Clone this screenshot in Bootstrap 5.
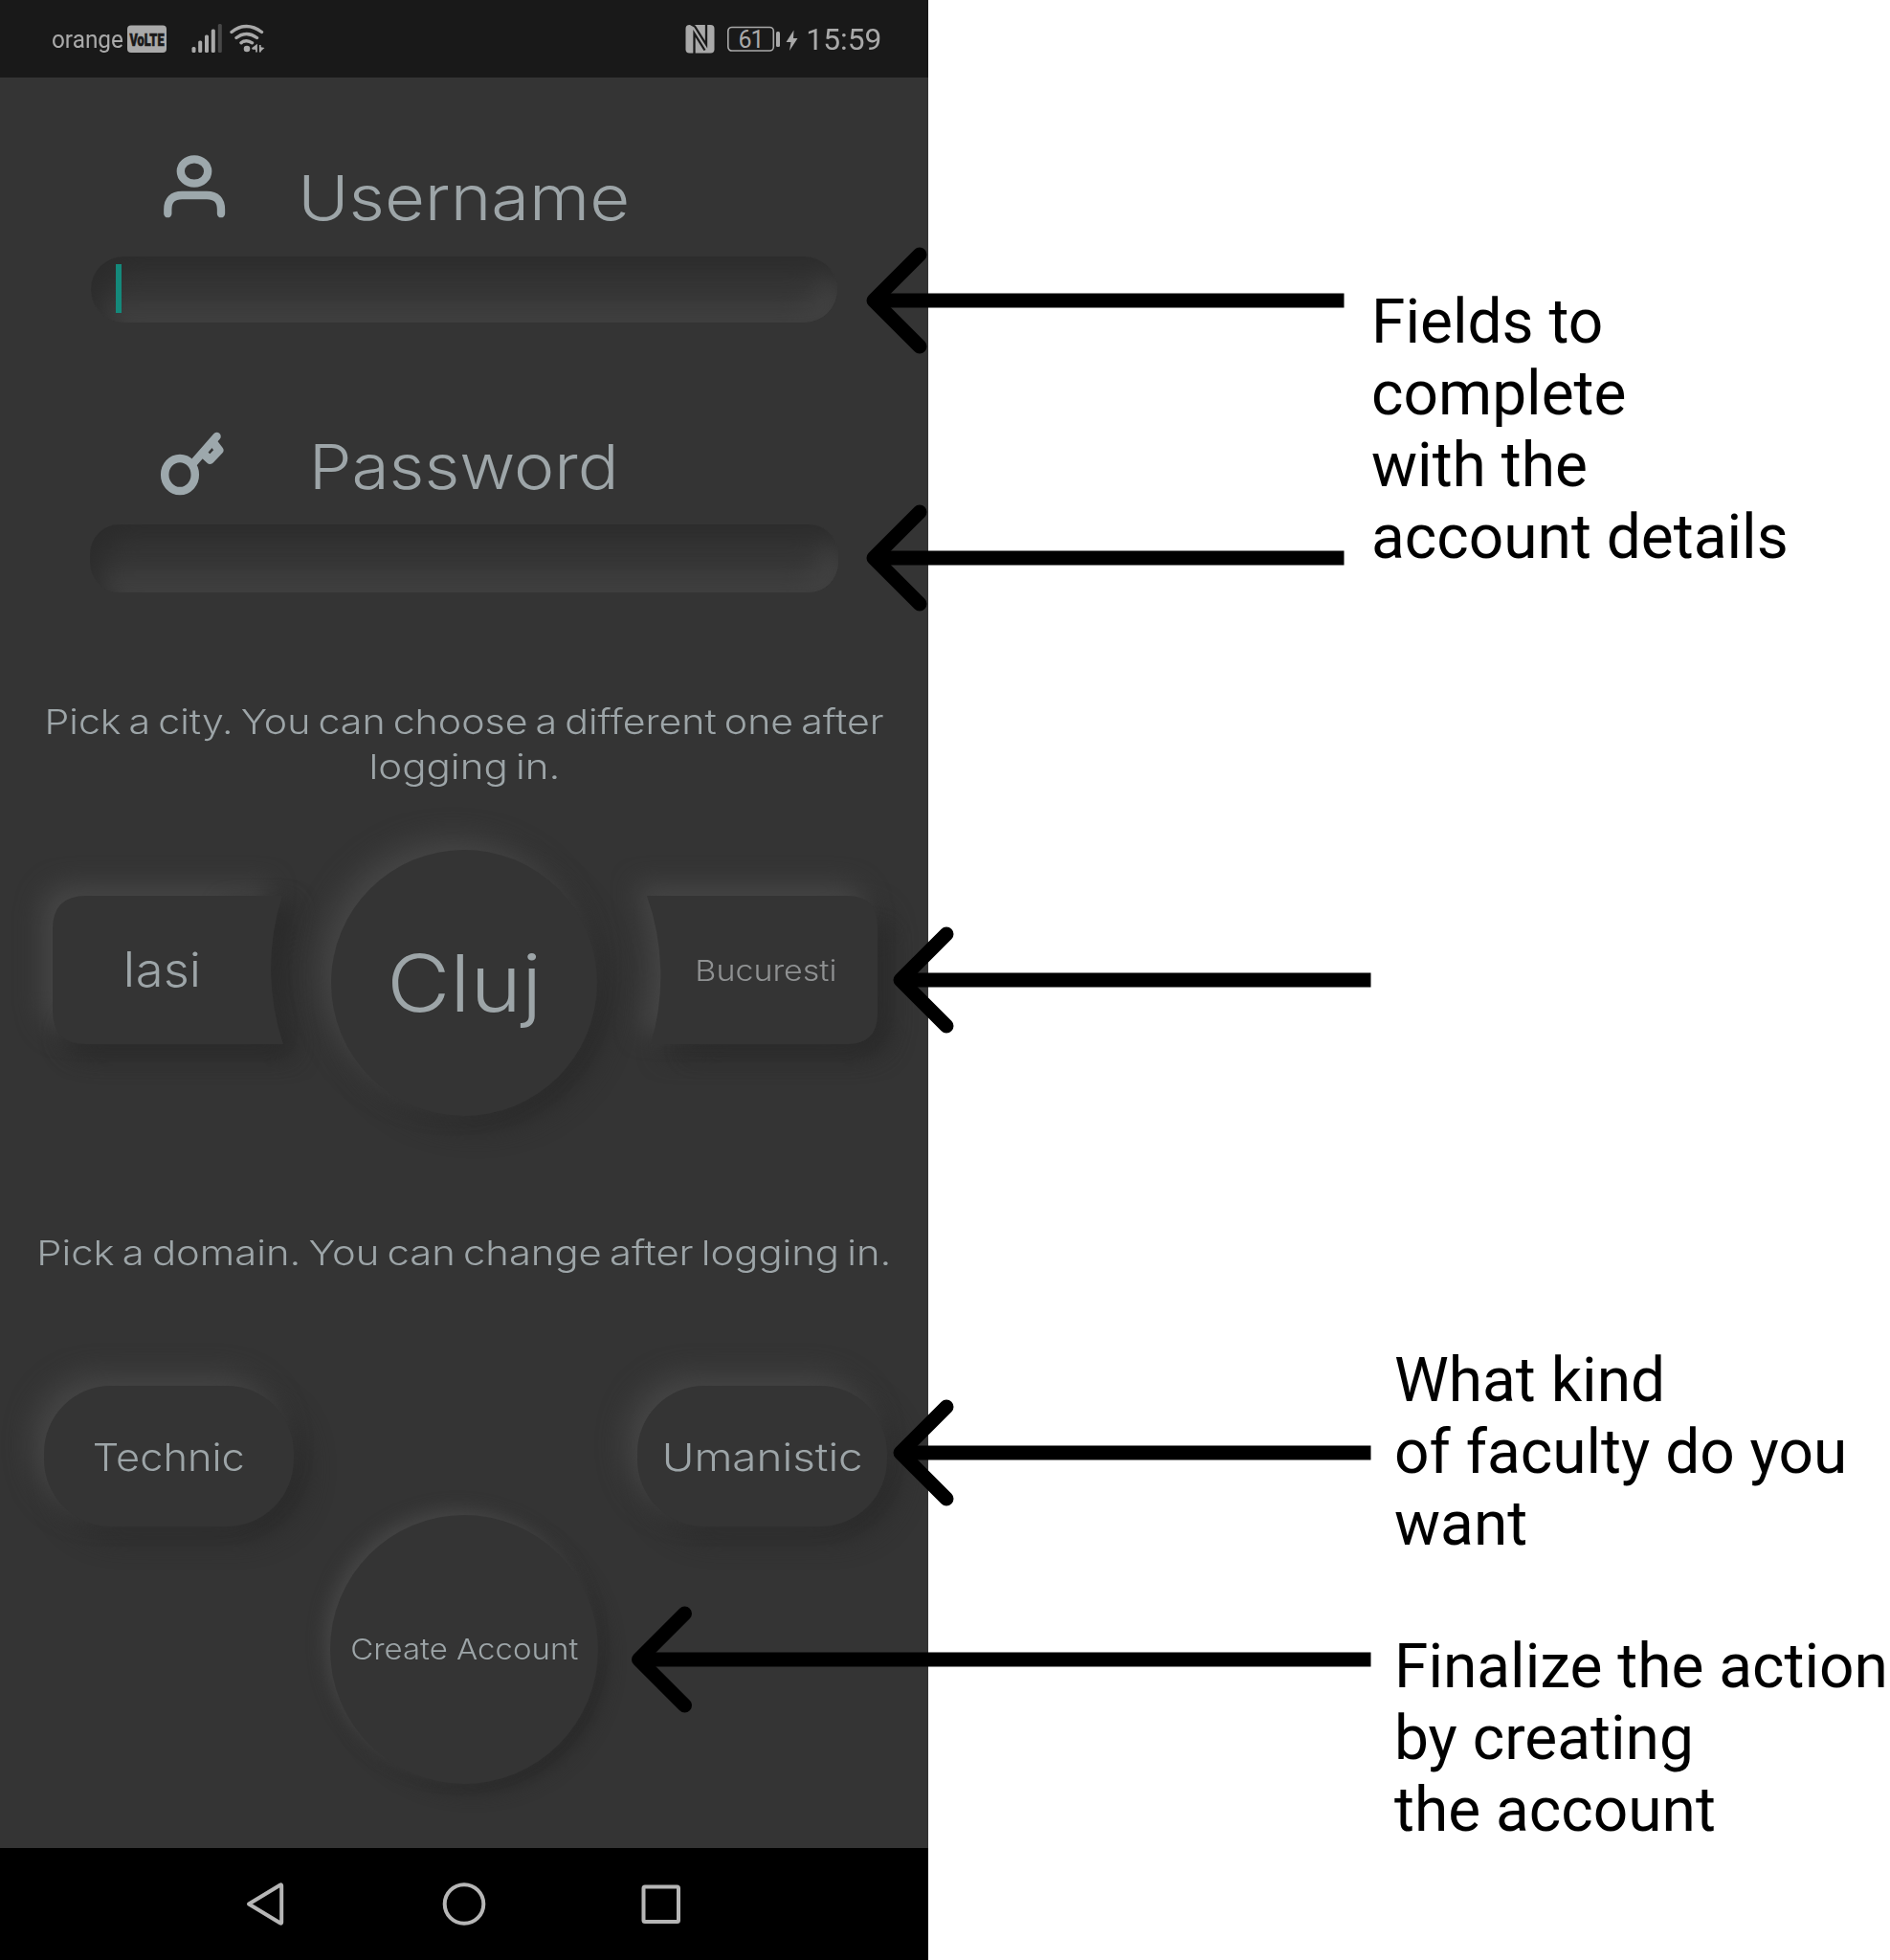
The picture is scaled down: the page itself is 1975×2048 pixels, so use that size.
<!DOCTYPE html>
<html lang="en">
<head>
<meta charset="utf-8">
<title>Create account guide</title>
<link href="https://cdn.jsdelivr.net/npm/bootstrap@5.3.0/dist/css/bootstrap.min.css" rel="stylesheet">
<style>
body{width:1975px;height:2048px;background:#fff;color:#000;overflow:hidden}
.phone{width:970px;height:2048px;background:#343434;color:#9da5a8;font-family:Inter,"Open Sans",sans-serif;font-weight:300}
.phone button{font-weight:300}
.statusbar{height:81px;background:#191919;color:#a9a9a9;font-family:Roboto,sans-serif;font-weight:400;padding:0 49px 0 54px}
.carrier{font-size:25px;line-height:81px;padding-top:1px}
.clock{font-size:32px;line-height:81px;padding-top:2px}
.screen{padding-top:75px}
.field-head{height:100px}
.icon-col{width:243px}
.title-col{width:484px;font-size:65px;line-height:100px;padding-top:1px}
.fit{display:inline-block;white-space:nowrap}
.sunk{width:780px;height:69px;border:0;border-radius:35px;background:#363636;margin:12px 0 0 95px;padding:8px 26px;
  box-shadow:inset 12px 16px 26px #2c2c2c,inset -14px -16px 26px #424242}
.sunk.second{width:782px;height:71px;border-radius:31px;margin:11px 0 0 94px}
.second-head{margin-top:100px}
.caret{width:6px;height:51px;background:#14897b}
.hint{font-size:35.5px;line-height:47px;word-spacing:-3px}
.city-hint{margin-top:112px}
.domain-hint{margin-top:119px}
.cities{margin-top:63px;padding-left:55px}
.side{width:241px;height:155px;margin-top:48px;display:grid;background:none;border:0;padding:0;color:inherit}
.side>*{grid-area:1/1}
.side svg{overflow:visible}
.raised{background:#343434;border:0;color:inherit;display:flex;align-items:center;justify-content:center;padding:0;
  box-shadow:-12px -12px 28px #454545,12px 12px 28px #2a2a2a}
.cluj{width:278px;height:278px;margin:0 52px 0 50px;font-size:82px}
.domains{margin-top:115px;padding:0 43px 0 46px}
.pill{width:261px;height:147px;border-radius:70px;font-size:40px;padding-top:2px}
.create{width:280px;height:281px;margin:-12px auto 0;font-size:30px;box-shadow:-7px -7px 16px #444,9px 9px 18px #2a2a2a}
.navkeys{height:117px;background:#000}
.notes{font-family:Roboto,sans-serif;font-size:64px;line-height:75px;padding-top:299px}
.notes p{margin:0;white-space:nowrap}
.n-fields{padding-left:463px}
.n-low{padding-left:487px}
.arrows{z-index:5;pointer-events:none}
</style>
</head>
<body>
<div class="d-flex position-relative">
  <div class="phone d-flex flex-column overflow-hidden flex-shrink-0">
    <header class="statusbar d-flex align-items-center justify-content-between">
      <div class="d-flex align-items-center">
        <span class="carrier fit" data-w="75">orange</span>
        <svg width="150" height="81" viewBox="129 0 150 81">
          <rect x="133" y="26.500" width="41" height="28.500" rx="4" fill="#a9a9a9"/>
          <text x="135.500" y="47.500" textLength="36" lengthAdjust="spacingAndGlyphs" font-size="19" font-weight="900" font-family="Roboto" fill="#191919" stroke="#191919" stroke-width=".7">VoLTE</text>
          <g fill="#a9a9a9"><rect x="200.500" y="49" width="4" height="6" rx="1.500"/><rect x="207.200" y="42.500" width="4" height="12.500" rx="1.500"/><rect x="214" y="36.500" width="4" height="18.500" rx="1.500"/><rect x="220.800" y="30.500" width="4" height="24.500" rx="1.500"/></g>
          <rect x="227.800" y="25" width="4" height="30" rx="1.500" fill="#484848"/>
          <g fill="none" stroke="#a9a9a9" stroke-width="3.400" stroke-linecap="round"><path d="M242 33.500Q257.500 21.500 273.500 33.500"/><path d="M247 39.500Q257.500 31.500 268.500 39.500"/><path d="M252 44.800Q257.500 40.500 263.500 44.800"/></g>
          <circle cx="258" cy="51" r="3.300" fill="#a9a9a9"/>
          <path d="M263.500 51L268 47.500V54.500M271.800 47V54.500" fill="none" stroke="#a9a9a9" stroke-width="1.800"/>
          <path d="M263.500 51.500L268 47.500V52ZM271.500 49L276.500 50L271.500 54.500Z" fill="#a9a9a9"/>
        </svg>
      </div>
      <div class="d-flex align-items-center">
        <svg width="127" height="81" viewBox="715 0 127 81">
          <rect x="716.500" y="26" width="30" height="29.500" rx="4" fill="#a9a9a9"/>
          <path d="M725.500 56V35L736.500 52.500M721.500 25L726 27.500L738 46.500V26" fill="none" stroke="#191919" stroke-width="2.300"/>
          <rect x="760.800" y="28.500" width="47.500" height="24.500" rx="4" fill="none" stroke="#a9a9a9" stroke-width="1.600"/>
          <rect x="811" y="33" width="4" height="16" rx="1.500" fill="#a9a9a9"/>
          <path d="M829.500 31.500L821.500 44H826.500L825 53L833.500 40H829Z" fill="#a9a9a9"/>
          <text x="771.500" y="50" font-size="25" font-family="Roboto" textLength="27" fill="#a9a9a9">61</text>
        </svg>
        <span class="clock fit" data-w="79">15:59</span>
      </div>
    </header>

    <main class="screen flex-grow-1">
      <div class="field-head d-flex align-items-center">
        <div class="icon-col d-flex justify-content-end">
          <svg width="80" height="100" viewBox="163 156 80 100" fill="none" stroke="#9da8ac" stroke-width="8.300" stroke-linecap="round">
            <ellipse cx="203" cy="179" rx="14.200" ry="12.700"/>
            <path d="M175.300 223.200V219Q175.300 204 190.300 204H216Q231 204 231 219V223.200"/>
          </svg>
        </div>
        <div class="title-col text-center"><span class="fit" data-w="347">Username</span></div>
      </div>
      <div class="sunk d-flex"><div class="caret"></div></div>

      <div class="field-head second-head d-flex align-items-center">
        <div class="icon-col d-flex justify-content-end">
          <svg width="80" height="100" viewBox="163 437 80 100" fill="none" stroke="#9da8ac" stroke-linecap="round" stroke-linejoin="round">
            <ellipse cx="188" cy="496" rx="15.800" ry="17" stroke-width="8.500"/>
            <path d="M202 484L226.500 456" stroke-width="8.500"/>
            <path d="M224 464L229 470.500L219.500 480.500L213.500 475" stroke-width="9"/>
          </svg>
        </div>
        <div class="title-col text-center"><span class="fit" data-w="324">Password</span></div>
      </div>
      <div class="sunk second"></div>

      <div class="hint city-hint text-center"><span class="fit" data-w="877">Pick a city. You can choose a different one after</span><br><span class="fit" data-w="200">logging in.</span></div>

      <div class="cities d-flex align-items-start">
        <button class="side">
          <svg width="241" height="155" viewBox="0 0 241 155">
            <defs>
              <filter id="soft" x="-30%" y="-40%" width="160%" height="180%" color-interpolation-filters="sRGB"><feGaussianBlur stdDeviation="13"/></filter>
              <path id="leftShape" d="M35 0H240A250 250 0 0 0 241 155H35Q0 155 0 120V35Q0 0 35 0Z"/>
            </defs>
            <use href="#leftShape" x="12" y="12" fill="#2a2a2a" filter="url(#soft)"/>
            <use href="#leftShape" x="-12" y="-12" fill="#454545" filter="url(#soft)"/>
            <path d="M241 0A250 250 0 0 0 241 155H35Q10 155 3 138L20 110H170V0Z" transform="translate(9 9)" fill="#2a2a2a" filter="url(#soft)" opacity=".7"/>
            <use href="#leftShape" fill="#343434"/>
          </svg>
          <span class="d-flex align-items-center justify-content-center" style="font-size:50px;padding-right:12px"><span class="fit" data-w="82">Iasi</span></span>
        </button>
        <button class="raised cluj rounded-circle"><span class="fit" data-w="162">Cluj</span></button>
        <button class="side">
          <svg width="241" height="155" viewBox="0 0 241 155">
            <defs><path id="rightShape" d="M0 0H209Q241 0 241 32V123Q241 155 209 155H4A250 250 0 0 0 0 0Z"/></defs>
            <use href="#rightShape" x="12" y="12" fill="#2a2a2a" filter="url(#soft)"/>
            <use href="#rightShape" x="-12" y="-12" fill="#454545" filter="url(#soft)"/>
            <path d="M70 110H190V30H241V123Q241 155 209 155H30Z" transform="translate(9 9)" fill="#2a2a2a" filter="url(#soft)" opacity=".7"/>
            <use href="#rightShape" fill="#343434"/>
          </svg>
          <span class="d-flex align-items-center justify-content-center" style="font-size:30px;padding:2px 0 0 7px;color:#8f9192"><span class="fit" data-w="148">Bucuresti</span></span>
        </button>
      </div>

      <div class="hint domain-hint text-center" style="padding-top:1px"><span class="fit" data-w="893">Pick a domain. You can change after logging in.</span></div>

      <div class="domains d-flex justify-content-between">
        <button class="raised pill"><span class="fit" data-w="159">Technic</span></button>
        <button class="raised pill"><span class="fit" data-w="210">Umanistic</span></button>
      </div>
      <button class="raised create rounded-circle"><span class="fit" data-w="238">Create Account</span></button>
    </main>

    <footer class="navkeys">
      <svg class="d-block" width="970" height="117" viewBox="0 1931 970 117" fill="none" stroke="#b6b6b6" stroke-width="4" stroke-linejoin="round">
        <path d="M260 1989.500L293 1969.500Q294.200 1969 294.200 1970.500V2008.500Q294.200 2010 293 2009.500Z"/>
        <circle cx="485" cy="1989.500" r="20.300"/>
        <rect x="672.500" y="1971.500" width="36.500" height="36.500" rx="1.500"/>
      </svg>
    </footer>
  </div>

  <aside class="notes flex-grow-1">
    <p class="n-fields">Fields to<br>complete<br>with the<br>account details</p>
    <p class="n-low" style="margin-top:806px">What kind<br>of faculty do you<br>want</p>
    <p class="n-low" style="margin-top:74px">Finalize the action<br>by creating<br>the account</p>
  </aside>

  <svg class="arrows position-absolute top-0 start-0" width="1975" height="2048" fill="none" stroke="#000" stroke-width="15" stroke-linejoin="round">
    <defs><path id="head" d="M48 -48L0 0L48 48" stroke-linecap="round"/></defs>
    <use href="#head" x="913" y="314"/><path d="M913 314H1404.500"/>
    <use href="#head" x="913" y="583"/><path d="M913 583H1404.500"/>
    <use href="#head" x="941" y="1024"/><path d="M941 1024H1432.500"/>
    <use href="#head" x="941" y="1518"/><path d="M941 1518H1432.500"/>
    <use href="#head" x="667.500" y="1734"/><path d="M667.500 1734H1432.500"/>
  </svg>
</div>
<script src="https://cdn.jsdelivr.net/npm/bootstrap@5.3.0/dist/js/bootstrap.bundle.min.js"></script>
<script>
// Stretch each label horizontally to its design width.
document.querySelectorAll('.fit').forEach(function (el) {
  var natural = el.getBoundingClientRect().width, target = +el.dataset.w;
  var side = (target - natural) / 2;
  el.style.margin = '0 ' + side + 'px';
  el.style.transform = 'scaleX(' + target / natural + ')';
});
</script>
</body>
</html>
